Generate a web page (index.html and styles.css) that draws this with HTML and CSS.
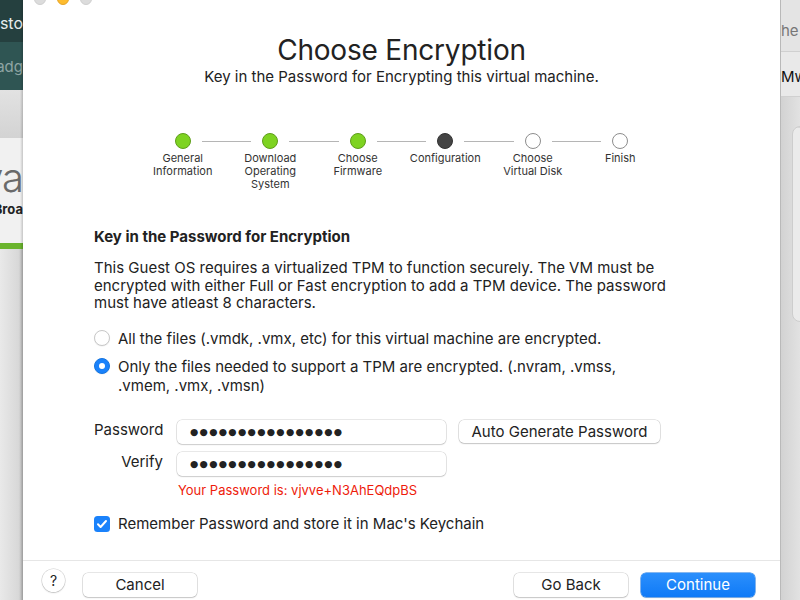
FILE: index.html
```html
<!DOCTYPE html>
<html>
<head>
<meta charset="utf-8">
<link rel="stylesheet" href="styles.css">
</head>
<body>
<div class="desktop">
  <aside class="bg-left">
    <div class="bl-top"><span>Custo</span></div>
    <div class="bl-sub"><span>Badg</span></div>
    <div class="bl-gray"></div>
    <div class="bl-brand">
      <div class="bl-big">va</div>
      <div class="bl-small">Broa</div>
    </div>
    <div class="bl-green"></div>
    <div class="bl-rest"></div>
  </aside>

  <main class="dialog">
    <div class="traffic">
      <span class="light gray"></span>
      <span class="light yellow"></span>
      <span class="light gray"></span>
    </div>

    <header class="head">
      <h1 class="title">Choose Encryption</h1>
      <p class="subtitle">Key in the Password for Encrypting this virtual machine.</p>
    </header>

    <ol class="stepper">
      <li class="step done first"><div class="dotrow"><i class="line"></i><span class="dot"></span><i class="line"></i></div><span class="label">General<br>Information</span></li>
      <li class="step done"><div class="dotrow"><i class="line"></i><span class="dot"></span><i class="line"></i></div><span class="label">Download<br>Operating<br>System</span></li>
      <li class="step done"><div class="dotrow"><i class="line"></i><span class="dot"></span><i class="line"></i></div><span class="label">Choose<br>Firmware</span></li>
      <li class="step current"><div class="dotrow"><i class="line"></i><span class="dot"></span><i class="line"></i></div><span class="label">Configuration</span></li>
      <li class="step todo"><div class="dotrow"><i class="line"></i><span class="dot"></span><i class="line"></i></div><span class="label">Choose<br>Virtual Disk</span></li>
      <li class="step todo last"><div class="dotrow"><i class="line"></i><span class="dot"></span><i class="line"></i></div><span class="label">Finish</span></li>
    </ol>

    <section class="content">
      <h2 class="sec-title">Key in the Password for Encryption</h2>
      <p class="desc">This Guest OS requires a virtualized TPM to function securely. The VM must be encrypted with either Full or Fast encryption to add a TPM device. The password must have atleast 8 characters.</p>

      <div class="radios">
        <label class="radio"><span class="rb"></span><span class="rtext">All the files (.vmdk, .vmx, etc) for this virtual machine are encrypted.</span></label>
        <label class="radio"><span class="rb on"></span><span class="rtext">Only the files needed to support a TPM are encrypted. (.nvram, .vmss,<br>.vmem, .vmx, .vmsn)</span></label>
      </div>

      <div class="form">
        <span class="flabel">Password</span>
        <div class="field"><span class="dots">●●●●●●●●●●●●●●●●</span></div>
        <button class="btn auto">Auto Generate Password</button>
        <span class="flabel">Verify</span>
        <div class="field"><span class="dots">●●●●●●●●●●●●●●●●</span></div>
        <span></span>
        <span></span>
        <p class="pwd-note">Your Password is: vjvve+N3AhEQdpBS</p>
      </div>

      <label class="check"><span class="cb"><svg viewBox="0 0 16 16" width="16" height="16"><path d="M4 8.3l2.6 2.7L12 5" fill="none" stroke="#fff" stroke-width="2" stroke-linecap="round" stroke-linejoin="round"/></svg></span><span class="ctext">Remember Password and store it in Mac's Keychain</span></label>
    </section>

    <footer class="footer">
      <button class="help">?</button>
      <button class="btn foot">Cancel</button>
      <span class="spacer"></span>
      <button class="btn foot">Go Back</button>
      <button class="btn foot primary">Continue</button>
    </footer>
  </main>

  <aside class="bg-right">
    <div class="br-top"><span>he</span></div>
    <div class="br-mid"><span>Mw</span></div>
    <div class="br-rest"><div class="br-card"></div></div>
  </aside>
</div>
</body>
</html>
```
FILE: styles.css
```css
* { box-sizing: border-box; }
html, body { margin: 0; padding: 0; }
body {
  width: 800px; height: 600px; overflow: hidden;
  font-family: "Inter", "Liberation Sans", sans-serif;
  color: #222;
}
.desktop { display: flex; width: 800px; height: 600px; overflow: hidden; }

/* background app left */
.bg-left { width: 23px; flex: none; display: flex; flex-direction: column; overflow: hidden; position: relative; }
.bg-left > div { overflow: hidden; white-space: nowrap; }
.bl-top, .bl-sub { display: flex; justify-content: flex-end; }
.bl-top { height: 42px; background: #25403f; color: #e8eeee; font-size: 16px; align-items: center; padding-top: 4px; }
.bl-sub { height: 48px; background: #2f5553; color: #8fa5a4; font-size: 15px; align-items: center; }
.bl-gray { height: 48px; background: linear-gradient(#e2e2e2, #d3d3d3); }
.bl-brand { height: 105px; background: #f1f1f1; }
.bl-big, .bl-small { display: flex; justify-content: flex-end; }
.bl-big { font-size: 40px; color: #6a6a6a; line-height: 40px; margin-top: 20px; letter-spacing: -1px; font-weight: 300; }
.bl-small { font-size: 13px; font-weight: 700; color: #222; margin-top: 3px; }
.bl-green { height: 6px; background: #6ab42d; }
.bl-rest { flex: 1; background: linear-gradient(90deg, #e9e9e9, #d8d8d8 80%, #bdbdbd); }
.bg-left::after { content: ""; position: absolute; top: 0; right: 0; width: 3px; height: 100%; background: linear-gradient(90deg, rgba(0,0,0,0), rgba(0,0,0,0.18)); }

/* background app right */
.bg-right { width: 20px; flex: none; display: flex; flex-direction: column; overflow: hidden; border-left: 1px solid #b9b9b9; }
.bg-right > div { overflow: hidden; white-space: nowrap; }
.br-top { height: 52px; background: #e4e4e4; color: #777; font-size: 15px; padding-top: 21px; border-bottom: 1px solid #d0d0d0; }
.br-mid { height: 45px; background: #e9e9e9; color: #111; font-size: 15px; padding-top: 15px; border-bottom: 1px solid #d0d0d0; }
.br-rest { flex: 1; background: linear-gradient(90deg, #d2d2d2, #e2e2e2); padding: 29px 0 0 11px; }
.br-card { height: 196px; width: 30px; background: #ebebeb; border: 1px solid #cdcdcd; border-radius: 8px; box-shadow: inset 0 28px 0 -27px #d6d6d6; }

/* dialog */
.dialog { width: 757px; flex: none; background: #fff; display: flex; flex-direction: column; position: relative; }
.traffic { display: flex; gap: 11px; padding-left: 11px; margin-top: -7px; height: 12px; }
.light { width: 12px; height: 12px; border-radius: 50%; }
.light.gray { background: #dcdcdc; border: 1px solid #cfcfcf; }
.light.yellow { background: #febc2e; border: 1px solid #e5a52a; }

.head { text-align: center; margin-top: 28px; }
.title { font-size: 28px; font-weight: 400; margin: 0; line-height: 34px; color: #222; letter-spacing: -0.2px; }
.subtitle { font-size: 15px; margin: 1px 0 0; line-height: 18px; color: #222; }

.stepper { list-style: none; margin: 47px 0 0 116px; padding: 0; display: flex; }
.step { width: 87.5px; display: flex; flex-direction: column; align-items: center; }
.dotrow { display: flex; align-items: center; width: 100%; height: 16px; }
.line { flex: 1; height: 1px; background: #b5b5b5; }
.line:first-child { margin-right: 11px; }
.line:last-child { margin-left: 11px; }
.first .line:first-child, .last .line:last-child { visibility: hidden; }
.dot { width: 16px; height: 16px; border-radius: 50%; flex: none; }
.done .dot { background: #7ed321; border: 1px solid #5f9e1b; }
.current .dot { background: #444; border: 1px solid #333; }
.todo .dot { background: #fff; border: 1px solid #8d8d8d; }
.label { font-size: 11px; line-height: 13px; text-align: center; color: #333; margin-top: 3px; }

.content { padding: 0 0 0 71px; }
.sec-title { font-size: 15px; font-weight: 700; margin: 37px 0 0; line-height: 18px; color: #222; }
.desc { font-size: 15px; line-height: 17.5px; margin: 13px 0 0; width: 592px; color: #222; }

.radios { margin-top: 17px; display: flex; flex-direction: column; gap: 9px; }
.radio { display: flex; align-items: flex-start; font-size: 15px; line-height: 19px; }
.rb { width: 16px; height: 16px; border-radius: 50%; border: 1px solid #c8c8c8; background: #fff; margin: 1px 8px 0 0; flex: none; box-shadow: 0 0.5px 1px rgba(0,0,0,0.08); }
.rb.on { background: #1a82fb; border-color: #1675e0; display: flex; align-items: center; justify-content: center; }
.rb.on::after { content: ""; width: 6px; height: 6px; border-radius: 50%; background: #fff; }

.form { display: grid; grid-template-columns: 70px 269px auto; column-gap: 13px; row-gap: 8px; margin-top: 25px; align-items: start; }
.flabel { font-size: 15px; text-align: right; line-height: 18px; padding-top: 1px; padding-right: 1px; }
.field { height: 24px; border-radius: 5px; background: #fff; box-shadow: 0 0 0 0.5px rgba(0,0,0,0.18), 0 1px 1.5px rgba(0,0,0,0.12); display: flex; align-items: center; padding-left: 13px; }
.dots { font-family: "DejaVu Sans", sans-serif; font-size: 9.5px; letter-spacing: 1.3px; color: #222; }
.pwd-note { grid-column: 2 / 4; margin: -2px 0 0; font-size: 13px; color: #ee1c0b; line-height: 16px; padding-left: 1px; }

.btn { font-family: inherit; font-size: 15px; color: #222; background: #fff; border: none; border-radius: 5px; box-shadow: 0 0 0 0.5px rgba(0,0,0,0.2), 0 1px 1.5px rgba(0,0,0,0.14); height: 23px; padding: 0 12px; line-height: 23px; }
.btn.auto { justify-self: start; width: 201px; }

.check { display: flex; align-items: flex-start; font-size: 15px; line-height: 18px; margin-top: 17px; }
.cb { width: 16px; height: 16px; border-radius: 3.5px; background: #1a82fb; margin: 1px 8px 0 0; flex: none; display: flex; }

.footer { margin-top: auto; height: 40px; border-top: 1px solid #e6e6e6; display: flex; align-items: center; padding: 0 25px 0 19px; }
.help { width: 23px; height: 23px; border-radius: 50%; background: #fff; border: none; box-shadow: 0 0 0 0.5px rgba(0,0,0,0.2), 0 1px 1.5px rgba(0,0,0,0.15); font-family: inherit; font-size: 14px; padding: 0; margin-right: 18px; color: #222; }
.btn.foot { width: 114px; height: 24px; margin-top: 8px; }
.spacer { flex: 1; }
.btn.foot.primary { margin-left: 13px; background: linear-gradient(#2b8ffc, #0f7af7); color: #fff; box-shadow: 0 0 0 0.5px #0c6fe0, 0 1px 1.5px rgba(0,0,0,0.14); }
```
